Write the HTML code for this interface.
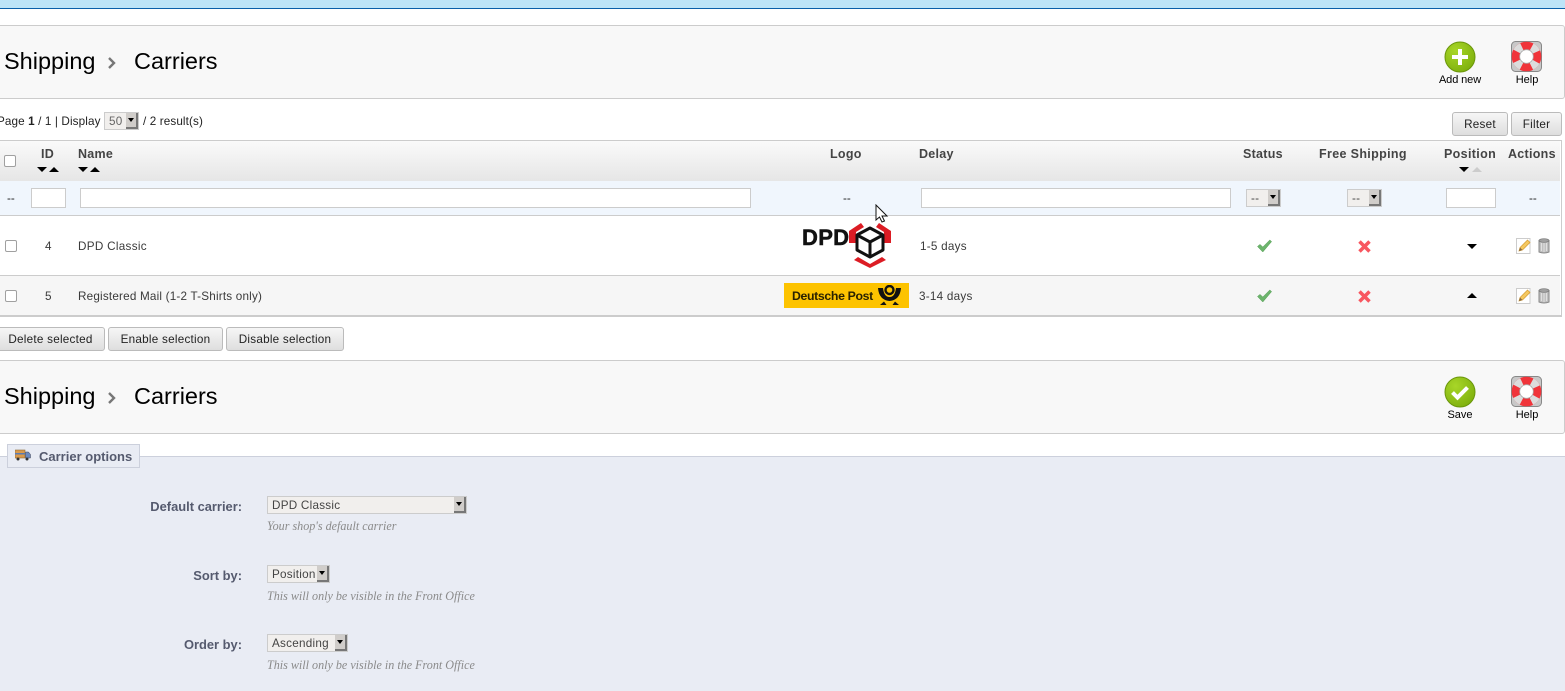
<!DOCTYPE html>
<html><head><meta charset="utf-8"><style>
html,body{margin:0;padding:0;background:#fff}
body{width:1565px;height:690px;overflow:hidden;position:relative;font-family:"Liberation Sans",sans-serif;color:#333}
.a{position:absolute;white-space:nowrap}
.box{position:absolute;left:-3px;width:1566px;height:72px;background:#f8f8f8;border:1px solid #ccc;border-radius:3px}
.ttl{font-size:23.5px;color:#000;line-height:28px}
.tb{font-size:11px;color:#000;text-align:center;line-height:13px}
.th{font-size:12.5px;font-weight:bold;color:#444;line-height:14px;letter-spacing:.28px}
.td{font-size:11.7px;color:#3a3a3a;line-height:14px;letter-spacing:.25px}
.dash{font-size:11.7px;color:#222;line-height:14px}
.btn{position:absolute;box-sizing:border-box;height:24px;border:1px solid #bbb;border-radius:3px;background:linear-gradient(#f6f6f6,#dedede);font-size:11.7px;color:#222;text-align:center;line-height:24px;letter-spacing:.25px}
.inp{position:absolute;box-sizing:border-box;height:20px;background:#fff;border:1px solid #ccc}
.sel{position:absolute;box-sizing:border-box;background:#f1efed;border:1px solid #ccc;font-size:11.7px;color:#444;letter-spacing:.25px;line-height:17px;padding-left:4px}
.sel i{position:absolute;right:0;top:0;bottom:0;width:12px;background:#d0cdca;border-right:2px solid #777;border-bottom:2px solid #777;box-sizing:border-box}
.sel i:after{content:"";position:absolute;left:2px;top:5px;border:3px solid transparent;border-top:4px solid #000;border-bottom:0}
.dn,.up{position:absolute;width:0;height:0;border-left:5px solid transparent;border-right:5px solid transparent}
.dn{border-top:5px solid #000}.up{border-bottom:5px solid #000}
.lbl{position:absolute;right:1323px;font-size:12.9px;font-weight:bold;color:#555a6e;line-height:15px}
.hint{position:absolute;left:267px;font-family:"Liberation Serif",serif;font-style:italic;font-size:12.1px;color:#8a8a8a;line-height:14px}
.cb{position:absolute;box-sizing:border-box;width:12px;height:12px;border:1px solid #a0a0a0;border-radius:2px;background:#fff}
</style></head><body>
<svg width="0" height="0" style="position:absolute"><defs><radialGradient id="g" cx=".35" cy=".3" r=".8"><stop offset="0" stop-color="#a8d628"/><stop offset="1" stop-color="#7cae0c"/></radialGradient></defs></svg>
<div class="a" style="left:0;top:0;width:1565px;height:8px;background:#bde4f7;border-bottom:1px solid #0a5fa8"></div>

<div class="box" style="top:25px"></div>
<div class="a ttl" style="left:4px;top:47px">Shipping</div>
<svg class="a" style="left:107px;top:56px" width="10" height="14"><path d="M2 2l5 5-5 5" fill="none" stroke="#777" stroke-width="2.400"/></svg>
<div class="a ttl" style="left:134px;top:47px">Carriers</div>
<svg class="a" style="left:1444px;top:41px" width="32" height="32"><circle cx="16" cy="16" r="15" fill="url(#g)" stroke="#6a960a" stroke-width="1"/><path d="M14 8h4v6h6v4h-6v6h-4v-6H8v-4h6z" fill="#fff"/></svg>
<div class="a tb" style="left:1430px;top:74px;width:60px;letter-spacing:-.1px">Add new</div>
<svg class="a" style="left:1511px;top:41px" width="31" height="31"><rect x=".5" y=".5" width="30" height="30" rx="4" fill="#c8c8c8" stroke="#888"/><circle cx="15.500" cy="15.500" r="10.800" fill="none" stroke="#f0343a" stroke-width="8"/><circle cx="15.500" cy="15.500" r="10.800" fill="none" stroke="#dcdcdc" stroke-width="8" stroke-dasharray="7 9.960" stroke-dashoffset="3.500" transform="rotate(45 15.500 15.500)"/><circle cx="15.500" cy="15.500" r="6.800" fill="#fff" stroke="#aaa" stroke-width=".8"/></svg>
<div class="a tb" style="left:1497px;top:74px;width:60px">Help</div>

<div class="a" style="left:-3px;top:115px;font-size:11.7px;color:#222;line-height:14px;letter-spacing:.12px">Page <b>1</b> / 1 | Display</div>
<div class="sel" style="left:104px;top:112px;width:35px;height:18px;color:#666"><span>50</span><i></i></div>
<div class="a" style="left:143px;top:115px;font-size:11.7px;color:#222;line-height:14px;letter-spacing:.12px">/ 2 result(s)</div>
<div class="btn" style="left:1452px;top:112px;width:56px">Reset</div>
<div class="btn" style="left:1511px;top:112px;width:51px">Filter</div>

<div class="a" style="left:-2px;top:140px;width:1562px;height:174px;border:1px solid #ccc;border-bottom:2px solid #ccc;background:#fff"></div>
<div class="a" style="left:0;top:141px;width:1560px;height:40px;background:linear-gradient(#fafafa,#e6e6e6)"></div>
<div class="a" style="left:0;top:181px;width:1560px;height:34px;background:#f0f6fd"></div>
<div class="a" style="left:0;top:215px;width:1560px;height:1px;background:#ccc"></div>
<div class="a" style="left:0;top:275px;width:1560px;height:1px;background:#ccc"></div>
<div class="a" style="left:0;top:276px;width:1560px;height:39px;background:#f6f6f6"></div>

<div class="cb" style="left:4px;top:155px"></div>
<div class="a th" style="left:41px;top:147px">ID</div>
<div class="dn" style="left:37px;top:167px"></div><div class="up" style="left:49px;top:167px"></div>
<div class="a th" style="left:78px;top:147px">Name</div>
<div class="dn" style="left:78px;top:167px"></div><div class="up" style="left:90px;top:167px"></div>
<div class="a th" style="left:830px;top:147px">Logo</div>
<div class="a th" style="left:919px;top:147px">Delay</div>
<div class="a th" style="left:1243px;top:147px">Status</div>
<div class="a th" style="left:1319px;top:147px;letter-spacing:.35px">Free Shipping</div>
<div class="a th" style="left:1444px;top:147px;letter-spacing:.35px">Position</div>
<div class="dn" style="left:1459px;top:167px"></div><div class="up" style="left:1472px;top:167px;border-bottom-color:#ccc"></div>
<div class="a th" style="left:1508px;top:147px">Actions</div>

<div class="a dash" style="left:7px;top:192px">--</div>
<div class="inp" style="left:31px;top:188px;width:35px"></div>
<div class="inp" style="left:80px;top:188px;width:671px"></div>
<div class="a dash" style="left:843px;top:192px">--</div>
<div class="inp" style="left:921px;top:188px;width:310px"></div>
<div class="sel" style="left:1246px;top:189px;width:35px;height:18px"><span>--</span><i></i></div>
<div class="sel" style="left:1347px;top:189px;width:35px;height:18px"><span>--</span><i></i></div>
<div class="inp" style="left:1446px;top:188px;width:50px"></div>
<div class="a dash" style="left:1529px;top:192px">--</div>

<div class="cb" style="left:5px;top:240px"></div>
<div class="a td" style="left:45px;top:240px">4</div>
<div class="a td" style="left:78px;top:240px;letter-spacing:.3px">DPD Classic</div>
<div class="a" style="left:802px;top:226px;font-size:22px;font-weight:bold;color:#111;line-height:24px;letter-spacing:.3px;-webkit-text-stroke:.5px #111">DPD</div>
<svg class="a" style="left:846px;top:220px" width="48" height="50">
<path d="M3 23V11L15 3l3 4-8 5v11zM45 23V11L33 3l-3 4 8 5v11zM12 37l12 7 12-7 4 3-16 8-16-8z" fill="#dc1c24"/>
<path d="M24 8l13 7v15l-13 7-13-7V15zM11 15l13 7 13-7M24 22v15" fill="none" stroke="#111" stroke-width="3" stroke-linejoin="round"/></svg>
<div class="a td" style="left:920px;top:240px">1-5 days</div>
<svg class="a" style="left:1257px;top:239px" width="15" height="14"><path d="M.5 7.500L3 5.400 5.800 8 12.800 1l1.800 1.600-8.800 10.400z" fill="#6cb46c" stroke="#4f9a4f" stroke-width=".5"/></svg>
<svg class="a" style="left:1357px;top:239px" width="15" height="15"><path d="M2.500 2.500l10 10M12.500 2.500l-10 10" stroke="#f8565f" stroke-width="3.500"/></svg>
<div class="dn" style="left:1467px;top:244px"></div>
<svg class="a" style="left:1516px;top:238px" width="15" height="16"><rect x=".5" y=".5" width="13.500" height="15" fill="#fff" stroke="#ccc"/><path d="M3 13l1-3.500 7.500-7.500 2.500 2.500-7.500 7.500z" fill="#f5c860" stroke="#d49a30" stroke-width=".7"/><path d="M3 13l1-3.500 2.500 2.500z" fill="#8a6a40"/></svg>
<svg class="a" style="left:1538px;top:238px" width="12" height="16"><path d="M1 2.500h10v11.500q-5 2-10 0z" fill="#c0c0c0" stroke="#888"/><ellipse cx="6" cy="2.500" rx="5" ry="1.800" fill="#a0a0a0" stroke="#777" stroke-width=".7"/><path d="M3.500 5v8M6 5v9M8.500 5v8" stroke="#e4e4e4" stroke-width=".9"/></svg>

<div class="cb" style="left:5px;top:290px"></div>
<div class="a td" style="left:45px;top:290px">5</div>
<div class="a td" style="left:78px;top:290px;letter-spacing:.2px">Registered Mail (1-2 T-Shirts only)</div>
<div class="a" style="left:784px;top:283px;width:125px;height:25px;background:#fdc300"></div>
<div class="a" style="left:792px;top:289px;font-size:12.3px;font-weight:bold;color:#2a2200;line-height:15px;letter-spacing:-.35px">Deutsche Post</div>
<svg class="a" style="left:877px;top:285px" width="25" height="21"><path d="M1 3h5q1 9 6.500 9T19 3h5q-1 12-11.500 13Q2 15 1 3z" fill="#111"/><circle cx="12.500" cy="5" r="4" fill="none" stroke="#111" stroke-width="2.400"/><path d="M7 16.500l-4 3.500h6.500zM18 16.500l4 3.500h-6.500z" fill="#111"/></svg>
<div class="a td" style="left:919px;top:290px">3-14 days</div>
<svg class="a" style="left:1257px;top:289px" width="15" height="14"><path d="M.5 7.500L3 5.400 5.800 8 12.800 1l1.800 1.600-8.800 10.400z" fill="#6cb46c" stroke="#4f9a4f" stroke-width=".5"/></svg>
<svg class="a" style="left:1357px;top:289px" width="15" height="15"><path d="M2.500 2.500l10 10M12.500 2.500l-10 10" stroke="#f8565f" stroke-width="3.500"/></svg>
<div class="up" style="left:1467px;top:293px"></div>
<svg class="a" style="left:1516px;top:288px" width="15" height="16"><rect x=".5" y=".5" width="13.500" height="15" fill="#fff" stroke="#ccc"/><path d="M3 13l1-3.500 7.500-7.500 2.500 2.500-7.500 7.500z" fill="#f5c860" stroke="#d49a30" stroke-width=".7"/><path d="M3 13l1-3.500 2.500 2.500z" fill="#8a6a40"/></svg>
<svg class="a" style="left:1538px;top:288px" width="12" height="16"><path d="M1 2.500h10v11.500q-5 2-10 0z" fill="#c0c0c0" stroke="#888"/><ellipse cx="6" cy="2.500" rx="5" ry="1.800" fill="#a0a0a0" stroke="#777" stroke-width=".7"/><path d="M3.500 5v8M6 5v9M8.500 5v8" stroke="#e4e4e4" stroke-width=".9"/></svg>

<svg class="a" style="left:875px;top:204px" width="14" height="20"><path d="M1 1v15l3.500-3 2.500 5 2.500-1-2.500-5h5z" fill="#fff" stroke="#111" stroke-width="1"/></svg>

<div class="btn" style="left:-4px;top:327px;width:109px">Delete selected</div>
<div class="btn" style="left:108px;top:327px;width:115px">Enable selection</div>
<div class="btn" style="left:226px;top:327px;width:118px">Disable selection</div>

<div class="box" style="top:360px"></div>
<div class="a ttl" style="left:4px;top:382px">Shipping</div>
<svg class="a" style="left:107px;top:391px" width="10" height="14"><path d="M2 2l5 5-5 5" fill="none" stroke="#777" stroke-width="2.400"/></svg>
<div class="a ttl" style="left:134px;top:382px">Carriers</div>
<svg class="a" style="left:1444px;top:376px" width="32" height="32"><circle cx="16" cy="16" r="15" fill="url(#g)" stroke="#6a960a" stroke-width="1"/><path d="M8.500 16.500l5 5 10-10" fill="none" stroke="#fff" stroke-width="4"/></svg>
<div class="a tb" style="left:1430px;top:409px;width:60px">Save</div>
<svg class="a" style="left:1511px;top:376px" width="31" height="31"><rect x=".5" y=".5" width="30" height="30" rx="4" fill="#c8c8c8" stroke="#888"/><circle cx="15.500" cy="15.500" r="10.800" fill="none" stroke="#f0343a" stroke-width="8"/><circle cx="15.500" cy="15.500" r="10.800" fill="none" stroke="#dcdcdc" stroke-width="8" stroke-dasharray="7 9.960" stroke-dashoffset="3.500" transform="rotate(45 15.500 15.500)"/><circle cx="15.500" cy="15.500" r="6.800" fill="#fff" stroke="#aaa" stroke-width=".8"/></svg>
<div class="a tb" style="left:1497px;top:409px;width:60px">Help</div>

<div class="a" style="left:0;top:456px;width:1565px;height:234px;background:#e9ecf4;border-top:1px solid #ccd0dc"></div>
<div class="a" style="left:7px;top:444px;width:131px;height:22px;background:#e9ecf4;border:1px solid #ccd0dc"></div>
<svg class="a" style="left:15px;top:449px" width="16" height="12"><rect x="0" y="1" width="10" height="8" fill="#d99a4c" stroke="#8a6a3a" stroke-width=".6"/><rect x="0" y="4" width="10" height="1.500" fill="#5a7ab0"/><path d="M10.500 3h3l2 2.500V9h-5z" fill="#6a8ac0" stroke="#445" stroke-width=".5"/><circle cx="3" cy="10" r="1.500" fill="#333"/><circle cx="12" cy="10" r="1.500" fill="#333"/></svg>
<div class="a" style="left:39px;top:449px;font-size:13px;font-weight:bold;color:#555a6e;line-height:15px">Carrier options</div>

<div class="lbl" style="top:499px">Default carrier:</div>
<div class="sel" style="left:267px;top:496px;width:200px;height:18px"><span>DPD Classic</span><i></i></div>
<div class="hint" style="top:519px">Your shop's default carrier</div>
<div class="lbl" style="top:568px">Sort by:</div>
<div class="sel" style="left:267px;top:565px;width:63px;height:18px"><span>Position</span><i></i></div>
<div class="hint" style="top:589px">This will only be visible in the Front Office</div>
<div class="lbl" style="top:637px">Order by:</div>
<div class="sel" style="left:267px;top:634px;width:81px;height:18px"><span>Ascending</span><i></i></div>
<div class="hint" style="top:658px">This will only be visible in the Front Office</div>
</body></html>
